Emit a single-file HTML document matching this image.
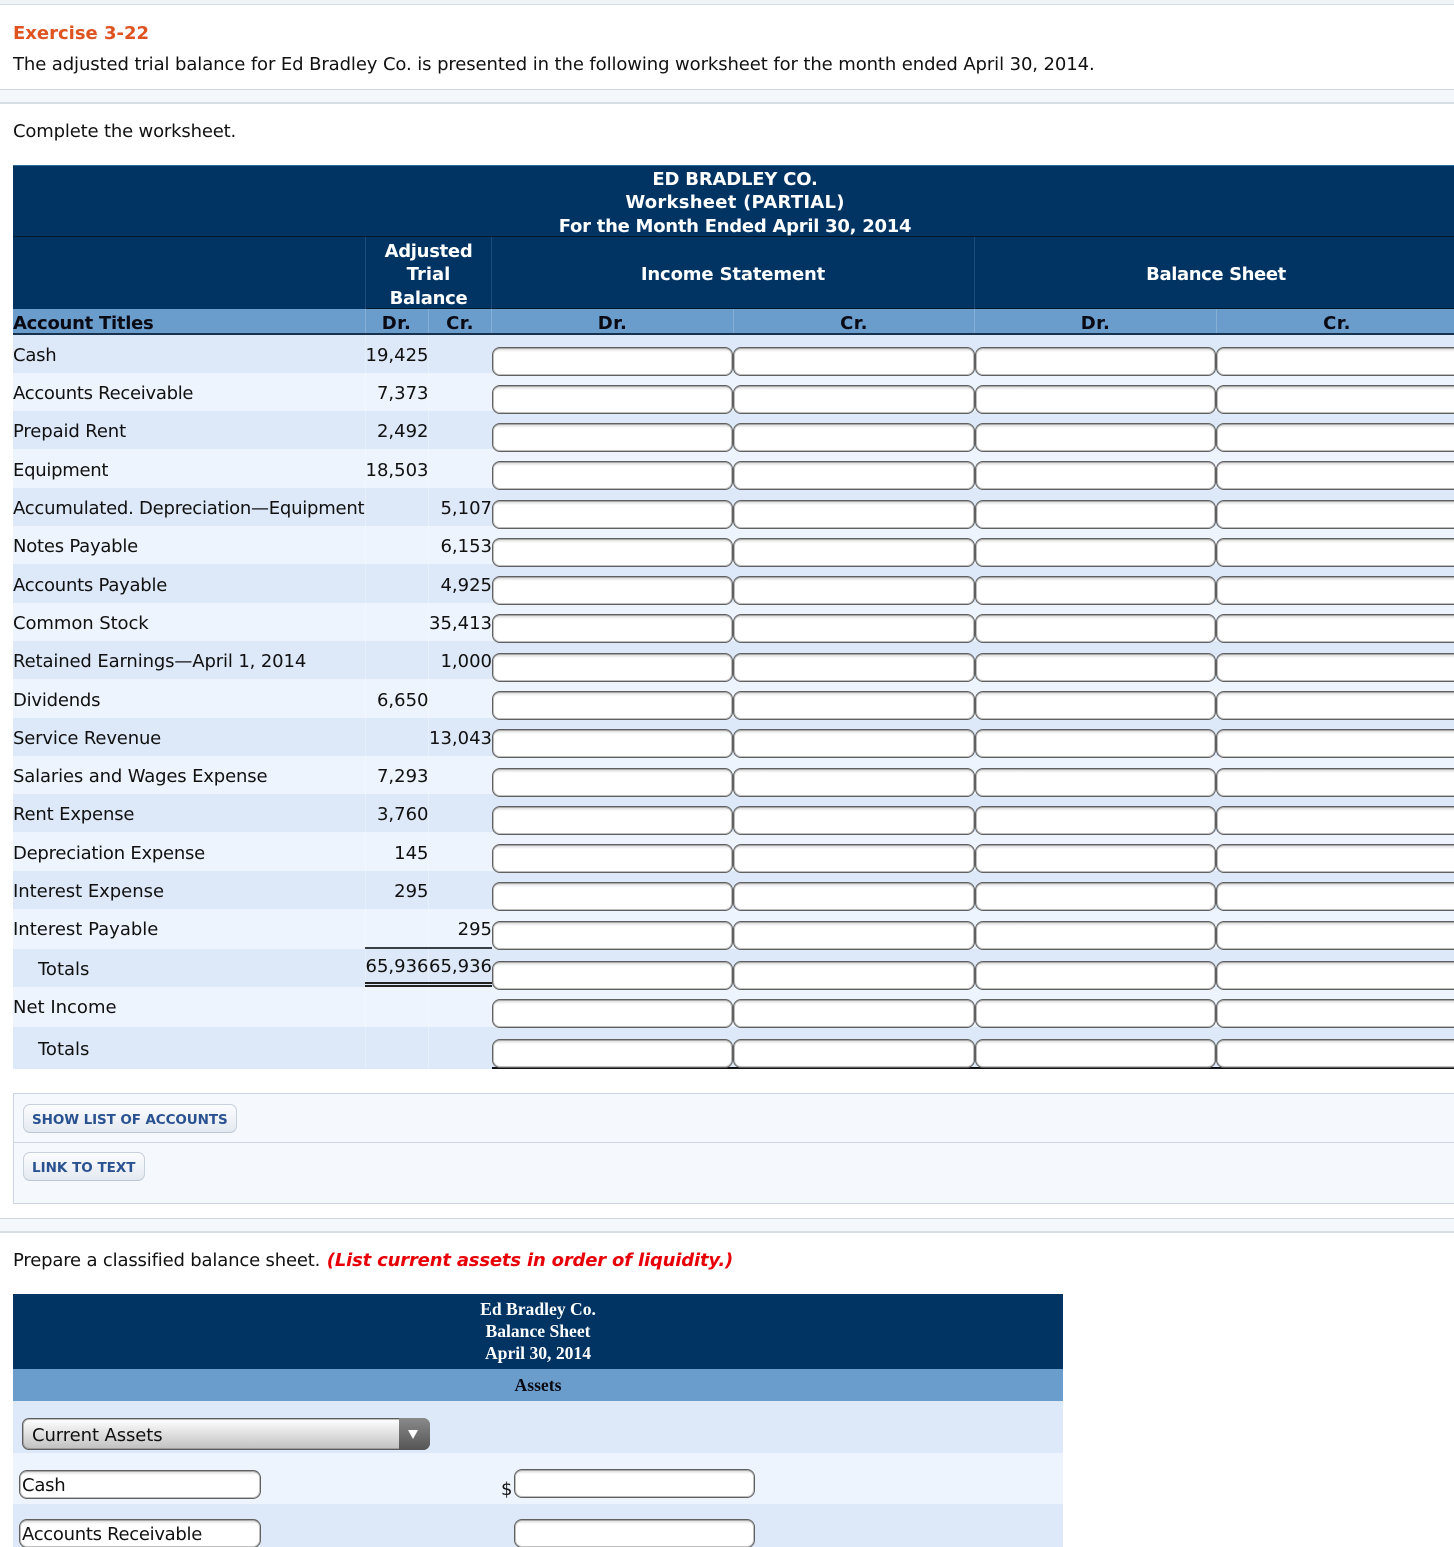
<!DOCTYPE html>
<html><head><meta charset="utf-8"><style>
html,body{margin:0;padding:0;background:#fff}
#p{position:relative;width:1454px;height:1547px;overflow:hidden;background:#fff;font-family:"DejaVu Sans","Liberation Sans",sans-serif;font-size:18px;color:#111}
#p div{position:absolute;box-sizing:border-box}
.t{white-space:nowrap;line-height:24px;height:24px}
.n{white-space:nowrap;line-height:24px;height:24px;text-align:right;width:70px}
.d{left:358.5px}.c{left:422px}
.w{color:#fff;font-weight:bold;text-align:center;white-space:nowrap;line-height:24px;height:24px}
.k{color:#0a0a14;font-weight:bold;text-align:center;white-space:nowrap;line-height:24px;height:24px}
.b1{left:13px;width:1441px;background:#dde8f8}
.b2{left:13px;width:1441px;background:#edf4fd}
.i{height:29px;background:linear-gradient(#d4d4d4,#fff 4px);border:1px solid #606060;border-radius:8px;box-shadow:inset 0 0 0 1px rgba(110,110,110,.45)}
.a{left:492px;width:241px}.e{left:733px;width:241.5px}.f{left:975px;width:241px}.g{left:1216px;width:246px}
.s{background:rgba(255,255,255,.3);width:1px}
.h{background:#1d4c7c;width:1px}
.m{background:#86afd6;width:1px}
.bt{background:linear-gradient(#fbfcfe,#e4e9f1);border:1px solid #c8d0dc;border-bottom-color:#bcc5d3;border-radius:7px;height:29px;color:#2a5290;font-weight:bold;font-size:13.5px;line-height:29px;white-space:nowrap;padding-left:8px;padding-top:1px}
.sf{font-family:"Liberation Serif",serif;font-weight:bold;font-size:17.6px;text-align:center;width:400px;left:338px;white-space:nowrap;line-height:22px;height:22px}
</style></head><body><div id="p">
<div style="left:0;top:0;width:1454px;height:4px;background:#f1f4f7"></div>
<div style="left:0;top:4px;width:1454px;height:1px;background:#d3dbe3"></div>
<div style="left:0;top:89px;width:1454px;height:1px;background:#cfd6e0"></div>
<div style="left:0;top:90px;width:1454px;height:12px;background:#f4f7fb"></div>
<div style="left:0;top:102px;width:1454px;height:2px;background:#d7dfe5"></div>
<div class="t" style="left:13px;top:22px;color:#df5320;font-weight:bold">Exercise 3-22</div>
<div class="t" style="left:13px;top:53px;letter-spacing:-.1px">The adjusted trial balance for Ed Bradley Co. is presented in the following worksheet for the month ended April 30, 2014.</div>
<div class="t" style="left:13px;top:120px;letter-spacing:-.17px">Complete the worksheet.</div>

<div style="left:13px;top:165px;width:1441px;height:144px;background:#013463"></div>
<div style="left:13px;top:165px;width:1441px;height:1px;background:#2b6a9b"></div>
<div style="left:13px;top:236px;width:1441px;height:1px;background:#04182c"></div>
<div style="left:13px;top:309px;width:1441px;height:25px;background:#6a9dcc"></div>
<div style="left:13px;top:333px;width:1441px;height:2px;background:#17324f"></div>
<div style="left:365px;top:308px;width:1089px;height:1px;background:#04182c"></div>
<div class="h" style="left:365px;top:237px;height:72px"></div>
<div class="h" style="left:491px;top:237px;height:72px"></div>
<div class="h" style="left:974px;top:237px;height:72px"></div>
<div class="m" style="left:365px;top:309px;height:24px"></div>
<div class="m" style="left:428px;top:309px;height:24px"></div>
<div class="m" style="left:491px;top:309px;height:24px"></div>
<div class="m" style="left:733px;top:309px;height:24px"></div>
<div class="m" style="left:974px;top:309px;height:24px"></div>
<div class="m" style="left:1216px;top:309px;height:24px"></div>
<div class="w" style="left:335px;width:800px;top:168px;letter-spacing:-.2px">ED BRADLEY CO.</div>
<div class="w" style="left:335px;width:800px;top:191px;letter-spacing:.25px">Worksheet (PARTIAL)</div>
<div class="w" style="left:335px;width:800px;top:215px;letter-spacing:-.27px">For the Month Ended April 30, 2014</div>
<div class="w" style="left:365px;width:127px;top:240px;letter-spacing:-.3px">Adjusted</div>
<div class="w" style="left:365px;width:127px;top:263px">Trial</div>
<div class="w" style="left:365px;width:127px;top:287px;letter-spacing:-.3px">Balance</div>
<div class="w" style="left:492px;width:482px;top:263px;letter-spacing:-.15px">Income Statement</div>
<div class="w" style="left:975px;width:482px;top:263px;letter-spacing:-.4px">Balance Sheet</div>
<div class="k" style="left:13px;top:312px;letter-spacing:-.27px">Account Titles</div>
<div class="k" style="left:365px;width:63px;top:312px;letter-spacing:.5px">Dr.</div>
<div class="k" style="left:429px;width:62px;top:312px;letter-spacing:.5px">Cr.</div>
<div class="k" style="left:492px;width:241px;top:312px;letter-spacing:.5px">Dr.</div>
<div class="k" style="left:734px;width:240px;top:312px;letter-spacing:.5px">Cr.</div>
<div class="k" style="left:975px;width:241px;top:312px;letter-spacing:.5px">Dr.</div>
<div class="k" style="left:1217px;width:240px;top:312px;letter-spacing:.5px">Cr.</div>

<div class="b1" style="top:335px;height:38px"></div>
<div class="b2" style="top:373px;height:38px"></div>
<div class="b1" style="top:411px;height:38px"></div>
<div class="b2" style="top:449px;height:39px"></div>
<div class="b1" style="top:488px;height:38px"></div>
<div class="b2" style="top:526px;height:38px"></div>
<div class="b1" style="top:564px;height:39px"></div>
<div class="b2" style="top:603px;height:38px"></div>
<div class="b1" style="top:641px;height:38px"></div>
<div class="b2" style="top:679px;height:39px"></div>
<div class="b1" style="top:718px;height:38px"></div>
<div class="b2" style="top:756px;height:38px"></div>
<div class="b1" style="top:794px;height:38px"></div>
<div class="b2" style="top:832px;height:39px"></div>
<div class="b1" style="top:871px;height:38px"></div>
<div class="b2" style="top:909px;height:40px"></div>
<div class="b1" style="top:949px;height:38px"></div>
<div class="b2" style="top:987px;height:40px"></div>
<div class="b1" style="top:1027px;height:42px"></div>
<div class="s" style="left:365px;top:335px;height:734px"></div>
<div class="s" style="left:428px;top:335px;height:734px"></div>

<div class="t" style="left:13px;top:344px;letter-spacing:-.25px">Cash</div><div class="n d" style="top:344px">19,425</div>
<div class="t" style="left:13px;top:382px;letter-spacing:-.29px">Accounts Receivable</div><div class="n d" style="top:382px">7,373</div>
<div class="t" style="left:13px;top:420px;letter-spacing:-.12px">Prepaid Rent</div><div class="n d" style="top:420px">2,492</div>
<div class="t" style="left:13px;top:459px;letter-spacing:-.28px">Equipment</div><div class="n d" style="top:459px">18,503</div>
<div class="t" style="left:13px;top:497px;letter-spacing:-.24px">Accumulated. Depreciation—Equipment</div><div class="n c" style="top:497px">5,107</div>
<div class="t" style="left:13px;top:535px;letter-spacing:-.23px">Notes Payable</div><div class="n c" style="top:535px">6,153</div>
<div class="t" style="left:13px;top:574px;letter-spacing:-.25px">Accounts Payable</div><div class="n c" style="top:574px">4,925</div>
<div class="t" style="left:13px;top:612px;letter-spacing:-.08px">Common Stock</div><div class="n c" style="top:612px">35,413</div>
<div class="t" style="left:13px;top:650px;letter-spacing:-.13px">Retained Earnings—April 1, 2014</div><div class="n c" style="top:650px">1,000</div>
<div class="t" style="left:13px;top:689px;letter-spacing:-.22px">Dividends</div><div class="n d" style="top:689px">6,650</div>
<div class="t" style="left:13px;top:727px;letter-spacing:-.17px">Service Revenue</div><div class="n c" style="top:727px">13,043</div>
<div class="t" style="left:13px;top:765px;letter-spacing:-.15px">Salaries and Wages Expense</div><div class="n d" style="top:765px">7,293</div>
<div class="t" style="left:13px;top:803px;letter-spacing:-.17px">Rent Expense</div><div class="n d" style="top:803px">3,760</div>
<div class="t" style="left:13px;top:842px;letter-spacing:-.25px">Depreciation Expense</div><div class="n d" style="top:842px">145</div>
<div class="t" style="left:13px;top:880px;letter-spacing:-.03px">Interest Expense</div><div class="n d" style="top:880px">295</div>
<div class="t" style="left:13px;top:918px">Interest Payable</div><div class="n c" style="top:918px">295</div>
<div class="t" style="left:38px;top:958px">Totals</div><div class="n d" style="top:955px">65,936</div><div class="n c" style="top:955px">65,936</div>
<div class="t" style="left:13px;top:996px">Net Income</div>
<div class="t" style="left:38px;top:1038px">Totals</div>
<div style="left:365px;top:947px;width:127px;height:2px;background:#3a3f45"></div>
<div style="left:365px;top:982px;width:127px;height:5px;border-top:2px solid #222;border-bottom:2px solid #222"></div>
<div style="left:492px;top:1067px;width:962px;height:2px;background:#111"></div>

<div class="i a" style="top:347px"></div><div class="i e" style="top:347px"></div><div class="i f" style="top:347px"></div><div class="i g" style="top:347px"></div>
<div class="i a" style="top:385px"></div><div class="i e" style="top:385px"></div><div class="i f" style="top:385px"></div><div class="i g" style="top:385px"></div>
<div class="i a" style="top:423px"></div><div class="i e" style="top:423px"></div><div class="i f" style="top:423px"></div><div class="i g" style="top:423px"></div>
<div class="i a" style="top:461px"></div><div class="i e" style="top:461px"></div><div class="i f" style="top:461px"></div><div class="i g" style="top:461px"></div>
<div class="i a" style="top:500px"></div><div class="i e" style="top:500px"></div><div class="i f" style="top:500px"></div><div class="i g" style="top:500px"></div>
<div class="i a" style="top:538px"></div><div class="i e" style="top:538px"></div><div class="i f" style="top:538px"></div><div class="i g" style="top:538px"></div>
<div class="i a" style="top:576px"></div><div class="i e" style="top:576px"></div><div class="i f" style="top:576px"></div><div class="i g" style="top:576px"></div>
<div class="i a" style="top:614px"></div><div class="i e" style="top:614px"></div><div class="i f" style="top:614px"></div><div class="i g" style="top:614px"></div>
<div class="i a" style="top:653px"></div><div class="i e" style="top:653px"></div><div class="i f" style="top:653px"></div><div class="i g" style="top:653px"></div>
<div class="i a" style="top:691px"></div><div class="i e" style="top:691px"></div><div class="i f" style="top:691px"></div><div class="i g" style="top:691px"></div>
<div class="i a" style="top:729px"></div><div class="i e" style="top:729px"></div><div class="i f" style="top:729px"></div><div class="i g" style="top:729px"></div>
<div class="i a" style="top:768px"></div><div class="i e" style="top:768px"></div><div class="i f" style="top:768px"></div><div class="i g" style="top:768px"></div>
<div class="i a" style="top:806px"></div><div class="i e" style="top:806px"></div><div class="i f" style="top:806px"></div><div class="i g" style="top:806px"></div>
<div class="i a" style="top:844px"></div><div class="i e" style="top:844px"></div><div class="i f" style="top:844px"></div><div class="i g" style="top:844px"></div>
<div class="i a" style="top:882px"></div><div class="i e" style="top:882px"></div><div class="i f" style="top:882px"></div><div class="i g" style="top:882px"></div>
<div class="i a" style="top:921px"></div><div class="i e" style="top:921px"></div><div class="i f" style="top:921px"></div><div class="i g" style="top:921px"></div>
<div class="i a" style="top:961px"></div><div class="i e" style="top:961px"></div><div class="i f" style="top:961px"></div><div class="i g" style="top:961px"></div>
<div class="i a" style="top:999px"></div><div class="i e" style="top:999px"></div><div class="i f" style="top:999px"></div><div class="i g" style="top:999px"></div>
<div class="i a" style="top:1039px"></div><div class="i e" style="top:1039px"></div><div class="i f" style="top:1039px"></div><div class="i g" style="top:1039px"></div>

<div style="left:13px;top:1093px;width:1445px;height:111px;background:#f5f8fc;border:1px solid #ced4e0"></div>
<div style="left:14px;top:1142px;width:1440px;height:1px;background:#ced4e0"></div>
<div class="bt" style="left:23px;top:1104px;width:214px;letter-spacing:-.1px">SHOW LIST OF ACCOUNTS</div>
<div class="bt" style="left:23px;top:1152px;width:122px">LINK TO TEXT</div>

<div style="left:0;top:1218px;width:1454px;height:1px;background:#cfd6e0"></div>
<div style="left:0;top:1219px;width:1454px;height:12px;background:#f4f7fb"></div>
<div style="left:0;top:1231px;width:1454px;height:2px;background:#d7dfe5"></div>
<div class="t" style="left:13px;top:1249px;letter-spacing:-.17px">Prepare a classified balance sheet. <b style="color:#e80008;font-style:italic;letter-spacing:-.18px;margin-left:1px">(List current assets in order of liquidity.)</b></div>

<div style="left:13px;top:1294px;width:1050px;height:76px;background:#013463"></div>
<div style="left:13px;top:1369px;width:1050px;height:32px;background:#6a9dcc"></div>
<div style="left:13px;top:1401px;width:1050px;height:52px;background:#dde8f8"></div>
<div style="left:13px;top:1453px;width:1050px;height:51px;background:#edf4fd"></div>
<div style="left:13px;top:1504px;width:1050px;height:43px;background:#dde8f8"></div>
<div class="sf" style="top:1298px;color:#fff">Ed Bradley Co.</div>
<div class="sf" style="top:1320px;color:#fff">Balance Sheet</div>
<div class="sf" style="top:1342px;color:#fff">April 30, 2014</div>
<div class="sf" style="top:1374px;color:#0a0a14">Assets</div>
<div style="left:22px;top:1418px;width:408px;height:32px;border:1px solid #5c5c5c;border-radius:7px;background:linear-gradient(#fff,#c0c0c0);box-shadow:inset 0 0 0 1px rgba(110,110,110,.45)"></div>
<div style="left:399px;top:1418px;width:31px;height:32px;border-radius:0 7px 7px 0;background:linear-gradient(#8a8a8a,#555)"></div>
<div style="left:408px;top:1430px;width:0;height:0;border-left:5px solid transparent;border-right:5px solid transparent;border-top:9px solid #fff"></div>
<div class="t" style="left:32px;top:1424px;letter-spacing:-.1px">Current Assets</div>
<div class="i" style="left:19px;top:1470px;width:242px;padding:0 2px;font-size:18px;line-height:30px;color:#111;white-space:nowrap;letter-spacing:-.25px">Cash</div>
<div class="i" style="left:19px;top:1519px;width:242px;padding:0 2px;font-size:18px;line-height:30px;color:#111;white-space:nowrap;letter-spacing:-.3px">Accounts Receivable</div>
<div class="t" style="left:501px;top:1478px">$</div>
<div class="i" style="left:514px;top:1469px;width:241px"></div>
<div class="i" style="left:514px;top:1519px;width:241px"></div>
</div></body></html>
